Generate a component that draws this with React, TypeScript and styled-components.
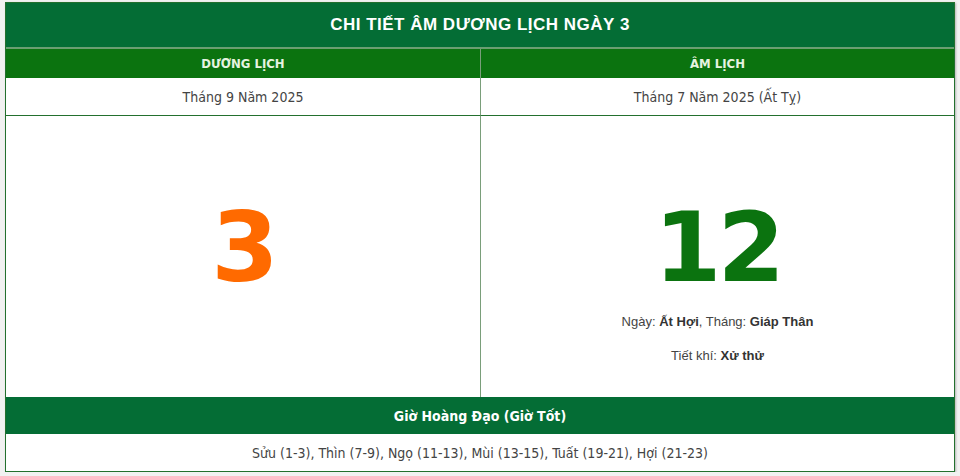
import React from 'react'
import styled, {createGlobalStyle} from 'styled-components'

const GlobalStyle = createGlobalStyle`
    html, body {
        margin: 0;
        padding: 0;
        background: #f1f1f1;
    }
    body {
        font-family: "DejaVu Sans Condensed", "DejaVu Sans", sans-serif;
    }
`

const Page = styled.div`
    padding: 2px 0 0 5px;
    width: 950px;
`

const Table = styled.div`
    background: #fff;
    border: 1px solid #23702e;
    box-shadow: 1px 1px 2px rgba(0, 0, 0, 0.25);
`

const Title = styled.div`
    height: 44px;
    display: flex;
    align-items: center;
    justify-content: center;
    background: #046d35;
    border-bottom: 2px solid #6b9e72;
    color: #fff;
    font-family: "Liberation Sans", Arial, sans-serif;
    font-weight: bold;
    font-size: 17px;
    letter-spacing: 0.5px;
`

const Row = styled.div`
    display: grid;
    grid-template-columns: 474px 1fr;
`

const HeadCell = styled.div<{$divider?: boolean}>`
    height: 29px;
    display: flex;
    align-items: center;
    justify-content: center;
    background: #0b730f;
    color: #e6f3e0;
    font-weight: bold;
    font-size: 13px;
    border-left: ${(p) => (p.$divider ? '1px solid #7a9e7a' : 'none')};
`

const MonthCell = styled.div<{$divider?: boolean}>`
    height: 37px;
    display: flex;
    align-items: center;
    justify-content: center;
    border-bottom: 1px solid #23702e;
    border-left: ${(p) => (p.$divider ? '1px solid #7a9e7a' : 'none')};
    color: #444;
    font-size: 14px;
`

const DayCell = styled.div<{$divider?: boolean}>`
    height: 281px;
    padding-top: 83px;
    box-sizing: border-box;
    display: flex;
    flex-direction: column;
    align-items: center;
    border-left: ${(p) => (p.$divider ? '1px solid #7a9e7a' : 'none')};
`

const DayNumber = styled.div<{$color: string}>`
    font-family: "DejaVu Sans", Verdana, sans-serif;
    font-weight: bold;
    font-size: 97px;
    line-height: 97px;
    letter-spacing: -4px;
    color: ${(p) => p.$color};
`

const Detail = styled.div`
    margin-top: 18px;
    font-family: "Liberation Sans", Arial, sans-serif;
    font-size: 13px;
    color: #444;

    & + & {
        margin-top: 19px;
    }

    b {
        color: #333;
    }
`

const Band = styled.div`
    height: 37px;
    display: flex;
    align-items: center;
    justify-content: center;
    background: #046d35;
    color: #fff;
    font-weight: bold;
    font-size: 14px;
`

const Hours = styled.div`
    height: 37px;
    display: flex;
    align-items: center;
    justify-content: center;
    color: #444;
    font-size: 14px;
`

export default function App() {
    return (
        <>
            <GlobalStyle/>
            <Page>
                <Table>
                    <Title>CHI TIẾT ÂM DƯƠNG LỊCH NGÀY 3</Title>
                    <Row>
                        <HeadCell>DƯƠNG LỊCH</HeadCell>
                        <HeadCell $divider>ÂM LỊCH</HeadCell>
                    </Row>
                    <Row>
                        <MonthCell>Tháng 9 Năm 2025</MonthCell>
                        <MonthCell $divider>Tháng 7 Năm 2025 (Ất Tỵ)</MonthCell>
                    </Row>
                    <Row>
                        <DayCell>
                            <DayNumber $color="#ff6a00">3</DayNumber>
                        </DayCell>
                        <DayCell $divider>
                            <DayNumber $color="#0b730f">12</DayNumber>
                            <Detail>Ngày: <b>Ất Hợi</b>, Tháng: <b>Giáp Thân</b></Detail>
                            <Detail>Tiết khí: <b>Xử thử</b></Detail>
                        </DayCell>
                    </Row>
                    <Band>Giờ Hoàng Đạo (Giờ Tốt)</Band>
                    <Hours>Sửu (1-3), Thìn (7-9), Ngọ (11-13), Mùi (13-15), Tuất (19-21), Hợi (21-23)</Hours>
                </Table>
            </Page>
        </>
    )
}
